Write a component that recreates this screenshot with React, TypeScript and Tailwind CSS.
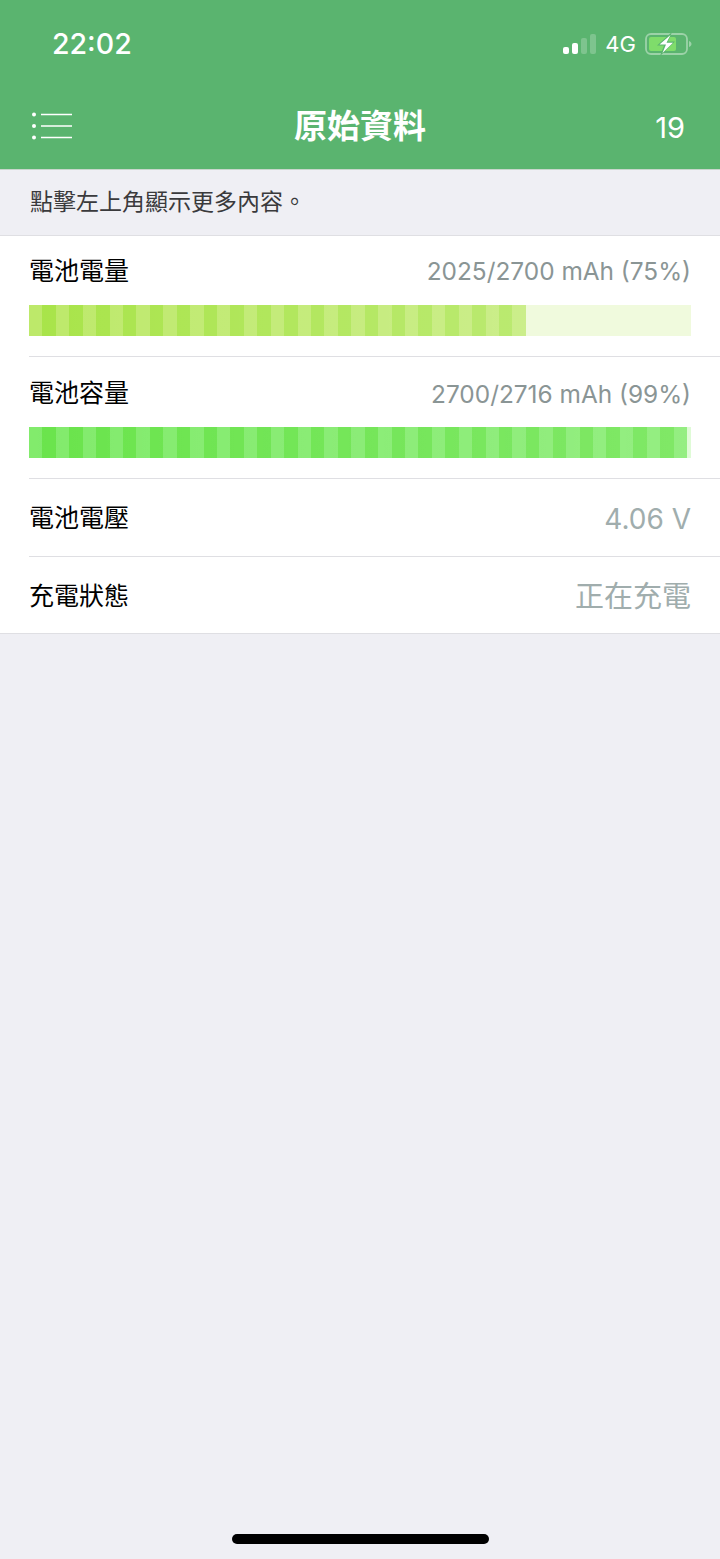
import React from "react";

const cjk = "font-['Inter','Noto_Sans_CJK_TC',sans-serif]";

interface BarProps {
  stripes: string;
  track: string;
  fill: string;
}

const Bar: React.FC<BarProps> = ({ stripes, track, fill }) => {
  return (
    <div className={`h-[31px] w-full ${track}`}>
      <div className={`h-full ${fill} ${stripes}`} />
    </div>
  );
};

const StatusIcons = () => {
  return (
    <div className="flex items-center">
      <svg width="33" height="20" viewBox="0 0 33 20" className="mr-[9px]">
        <rect x="0" y="13" width="6" height="7" rx="2" fill="#fff" />
        <rect x="9" y="9" width="6" height="11" rx="2" fill="#fff" />
        <rect x="18" y="4" width="6" height="16" rx="2" fill="#fff" fillOpacity="0.22" />
        <rect x="27" y="0" width="6" height="20" rx="2" fill="#fff" fillOpacity="0.22" />
      </svg>
      <span className="mr-[9px] text-[22px] leading-none text-white">4G</span>
      <svg width="47" height="22" viewBox="0 0 47 22">
        <rect x="1" y="1" width="41" height="20" rx="5" fill="none" stroke="#fff" strokeOpacity="0.4" strokeWidth="1.8" />
        <rect x="4" y="4" width="27" height="14" rx="2" fill="#7fdc6b" />
        <path d="M44 8v6c1.500-.5 2.500-1.600 2.500-3s-1-2.500-2.500-3z" fill="#fff" fillOpacity="0.4" />
        <path d="M27 -1 12 12.500h7L15 23 30 8.500h-7z" fill="#5ab46f" />
        <path d="M25.500 2 14.500 11.500h6.500L17.500 20 28 9.800h-6.500z" fill="#fff" />
      </svg>
    </div>
  );
};

const MenuIcon = () => {
  return (
    <svg width="42" height="28" viewBox="0 0 42 28" className="mb-[2px]">
      <circle cx="3" cy="2.500" r="2" fill="#fff" />
      <circle cx="3" cy="14" r="2" fill="#fff" />
      <circle cx="3" cy="25.500" r="2" fill="#fff" />
      <path d="M10 2.500h31M10 14h31M10 25.500h31" stroke="#fff" strokeWidth="1.500" />
    </svg>
  );
};

export default function App() {
  return (
    <div className={`flex h-[1559px] flex-col bg-[#efeff4] ${cjk}`}>
      {/* header */}
      <div className="h-[170px] shrink-0 border-b border-[#c8d6cc] bg-[#5ab46f] text-white">
        <div className="flex h-[88px] items-center justify-between pl-[52px] pr-[28px]">
          <span className="text-[28.5px] font-medium leading-none">22:02</span>
          <StatusIcons />
        </div>
        <div className="flex h-[81px] items-center justify-between pb-[4px] pl-[31px] pr-[35px]">
          <MenuIcon />
          <span className="pl-[4px] text-[33px] font-bold leading-none">原始資料</span>
          <span className="w-[42px] pt-[2px] text-right text-[29px] leading-none">19</span>
        </div>
      </div>

      <div className="flex h-[65px] shrink-0 items-center pl-[30px] text-[23px] text-[#3a3a3c]">
        點擊左上角顯示更多內容。
      </div>

      {/* list */}
      <div className="shrink-0 border-y border-[#dfdfe3] bg-white pl-[29px]">
        <div className="h-[121px] border-b border-[#dfdfe3] pr-[29px]">
          <div className="flex h-[69px] items-center justify-between pt-[2px]">
            <span className="text-[25px] text-black">電池電量</span>
            <span className="text-[24.4px] text-[#8a9595]">2025/2700 mAh (75%)</span>
          </div>
          <Bar
            track="bg-[#f0fadd]"
            fill="w-[75%]"
            stripes="bg-[linear-gradient(90deg,rgba(255,255,255,0),rgba(255,255,255,0.22)),repeating-linear-gradient(90deg,#bde96a_0,#bde96a_13.43px,#a8e449_13.43px,#a8e449_26.86px)]"
          />
        </div>
        <div className="h-[122px] border-b border-[#dfdfe3] pr-[29px]">
          <div className="flex h-[70px] items-center justify-between pt-[4px]">
            <span className="text-[25px] text-black">電池容量</span>
            <span className="text-[24.4px] text-[#8a9595]">2700/2716 mAh (99%)</span>
          </div>
          <Bar
            track="bg-[#dffbd6]"
            fill="w-[99.4%]"
            stripes="bg-[linear-gradient(90deg,rgba(255,255,255,0),rgba(255,255,255,0.15)),repeating-linear-gradient(90deg,#82eb6c_0,#82eb6c_13.43px,#6ae44c_13.43px,#6ae44c_26.86px)]"
          />
        </div>
        <div className="flex h-[78px] items-center justify-between border-b border-[#dfdfe3] pr-[29px] pt-[2px]">
          <span className="text-[25px] text-black">電池電壓</span>
          <span className="text-[28px] text-[#a0adad]">4.06 V</span>
        </div>
        <div className="flex h-[76px] items-center justify-between pr-[29px] pt-[4px]">
          <span className="text-[25px] text-black">充電狀態</span>
          <span className="text-[29px] text-[#a0adad]">正在充電</span>
        </div>
      </div>

      {/* home indicator */}
      <div className="mt-auto mb-[15px] h-[10px] w-[257px] self-center rounded-full bg-black" />
    </div>
  );
}
